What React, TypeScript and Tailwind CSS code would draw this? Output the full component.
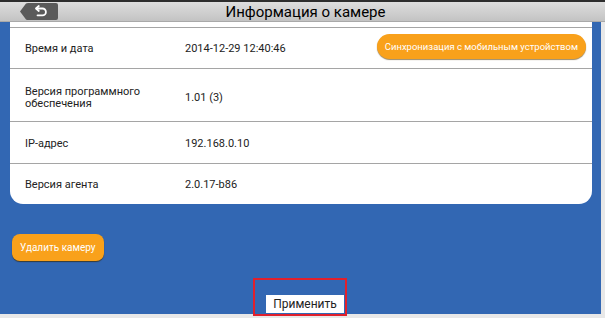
import React from 'react';

interface InfoRow {
  label: React.ReactNode;
  value: string;
  className: string;
  action?: string;
}

const rows: InfoRow[] = [
  { label: 'Время и дата', value: '2014-12-29 12:40:46', className: 'h-[41px] pt-[1px]', action: 'Синхронизация с мобильным устройством' },
  { label: <>Версия программного<br />обеспечения</>, value: '1.01 (3)', className: 'h-[53px] pt-[6px]' },
  { label: 'IP-адрес', value: '192.168.0.10', className: 'h-[42px] pt-[3px]' },
  { label: 'Версия агента', value: '2.0.17-b86', className: 'h-[41px] pt-[1px]' },
];

function BackButton() {
  return (
    <svg width="40" height="19" viewBox="0 0 40 19" className="block">
      <path d="M1 9.5 L7 1.5 Q8 1 9 1 H37 Q39 1 39 3 V16 Q39 18 37 18 H9 Q8 18 7 17.5 Z" fill="#5a5a5a" />
      <path d="M17.5 6.5 h6 a3.4 3.4 0 0 1 0 6.8 h-5" fill="none" stroke="#fff" strokeWidth="1.8" strokeLinecap="round" />
      <path d="M19.8 4 L17 6.5 L19.8 9" fill="none" stroke="#fff" strokeWidth="1.8" strokeLinecap="round" strokeLinejoin="round" />
    </svg>
  );
}

export default function App() {
  return (
    <div className="relative w-[605px] h-[318px] flex flex-col overflow-hidden bg-[#e6e6e6] font-['Roboto','Liberation_Sans',sans-serif]">
      <div className="h-[2px] bg-[#2e2e2e]" />
      <div className="h-[20px] flex items-center bg-gradient-to-b from-[#dedede] to-[#c3c3c3] border-b border-[#a9a9a9] relative">
        <div className="pl-[19px]">
          <BackButton />
        </div>
        <div className="absolute inset-0 flex items-center justify-center text-[15px] text-black leading-none pt-[1px] pl-[6px]">
          Информация о камере
        </div>
      </div>

      <div className="flex-1 flex">
        <div className="flex-1 flex flex-col bg-[#3267b3] pl-[10px] pr-[9px]">
          <div className="bg-white rounded-b-[13px] flex flex-col pt-[5px]">
            {rows.map((row, i) => (
              <div
                key={i}
                className={`${row.className} flex items-center border-t border-[#a5a5a5] text-[11px] text-[#222] leading-[12px]`}
              >
                <div className="w-[175px] pl-[15px]">{row.label}</div>
                <div className="flex-1">{row.value}</div>
                {row.action && (
                  <button className="mr-[6px] -mt-[4px] h-[25px] px-[8px] rounded-full bg-[#f9a11b] text-white text-[9.5px] shadow-[0_1px_1px_rgba(90,60,0,0.6)]">
                    {row.action}
                  </button>
                )}
              </div>
            ))}
          </div>

          <div className="pt-[30px] pl-[2px]">
            <button className="h-[27px] px-[8px] rounded-[8px] bg-[#f9a11b] text-white text-[10px] shadow-[0_1px_1px_rgba(60,40,0,0.7)]">
              Удалить камеру
            </button>
          </div>

          <div className="flex-1 flex items-end justify-center pb-[1px] pl-[8px]">
            <button className="h-[18px] w-[78px] bg-white text-[12px] text-[#222] leading-none">
              Применить
            </button>
          </div>
        </div>
        <div className="w-[4px] bg-[#e8e8e8]" />
      </div>
      <div className="h-[4px] bg-[#e8e8e8]" />

      {/* annotation frame */}
      <div className="absolute left-[253px] top-[278px] w-[94px] h-[38px] border-2 border-[#e0202c]" />
    </div>
  );
}
